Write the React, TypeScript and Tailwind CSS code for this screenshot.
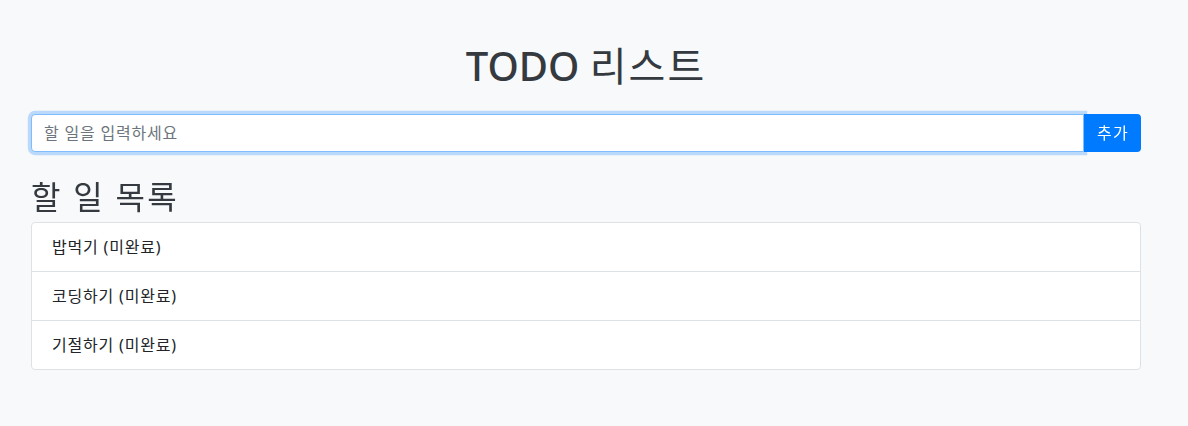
import { useState } from 'react'

const todos = [
  { id: 1, text: '밥먹기', done: false },
  { id: 2, text: '코딩하기', done: false },
  { id: 3, text: '기절하기', done: false },
]

export default function App() {
  const [value, setValue] = useState('')

  return (
    <div
      className="min-h-[426px] bg-[#f8f9fa] text-[#212529]"
      style={{ fontFamily: '"Noto Sans", "Noto Sans CJK KR", sans-serif' }}
    >
      <div className="ml-[31px] w-[1110px] pt-[42px]">
        <h1 className="mb-6 text-center text-[40px] leading-[48px] text-[#343a40]">
          <span className="font-medium">TODO</span>{' '}
          <span className="font-normal tracking-[0.05em]">리스트</span>
        </h1>

        {/* input group */}
        <div className="flex h-[38px]">
          <input
            autoFocus
            value={value}
            onChange={(e) => setValue(e.target.value)}
            placeholder="할 일을 입력하세요"
            className="min-w-0 flex-1 rounded-l-[4px] border border-[#80bdff] bg-white px-3 text-base tracking-[0.05em] text-[#495057] shadow-[0_0_0_3.2px_rgba(0,123,255,0.25)] outline-none placeholder:text-[#6c757d]"
          />
          <button className="rounded-r-[4px] bg-[#007bff] pl-[13px] pr-[12px] text-base tracking-[0.08em] text-white">
            추가
          </button>
        </div>

        <h2 className="mt-[26px] mb-[6px] text-[32px] leading-[38px] font-normal tracking-[0.07em] text-[#343a40]">
          할 일 목록
        </h2>

        <ul className="overflow-hidden rounded-[4px] border border-[#dee2e6] bg-white">
          {todos.map((t, i) => (
            <li
              key={t.id}
              className={
                'px-5 py-3 text-base leading-6 tracking-[0.05em]' +
                (i > 0 ? ' border-t border-[#dee2e6]' : '')
              }
            >
              {t.text} ({t.done ? '완료' : '미완료'})
            </li>
          ))}
        </ul>
      </div>
    </div>
  )
}
